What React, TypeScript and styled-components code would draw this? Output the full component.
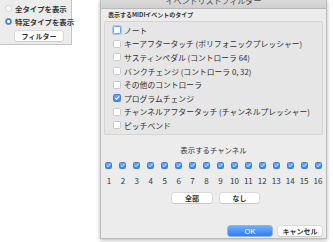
import * as React from "react";
import styled, { createGlobalStyle } from "styled-components";

const GlobalStyle = createGlobalStyle`
  body {
    margin: 0;
    background: #ffffff;
    font-family: "Noto Sans CJK JP", "Noto Sans", sans-serif;
    color: #2a2a2a;
  }
`;

const eventTypes = [
  { label: "ノート", checked: false, focus: true },
  { label: "キーアフタータッチ (ポリフォニックプレッシャー)", checked: false },
  { label: "サスティンペダル (コントローラ 64)", checked: false },
  { label: "バンクチェンジ (コントローラ 0, 32)", checked: false },
  { label: "その他のコントローラ", checked: false },
  { label: "プログラムチェンジ", checked: true },
  { label: "チャンネルアフタータッチ (チャンネルプレッシャー)", checked: false },
  { label: "ピッチベンド", checked: false }
];

const channels = Array.from({ length: 16 }, (_, i) => i + 1);

const Page = styled.div`
  display: flex;
  align-items: flex-start;
  width: 333px;
  height: 242px;
  overflow: hidden;
`;

const SidePanel = styled.div`
  width: 71px;
  height: 42px;
  background: #ececec;
  border-right: 1px solid #c4c4c4;
  border-bottom: 1px solid #c4c4c4;
  display: flex;
  flex-direction: column;
  padding-top: 2px;
  box-sizing: content-box;
`;

const RadioRow = styled.div`
  display: flex;
  align-items: center;
  height: 13px;
  padding-left: 5px;
  gap: 3px;
  font-size: 7.4px;
  font-weight: 700;
  color: #333;
  white-space: nowrap;
`;

const Radio = styled.span<{ $on?: boolean }>`
  width: 7px;
  height: 7px;
  border-radius: 50%;
  box-sizing: border-box;
  flex: none;
  background: ${(p) => (p.$on ? "radial-gradient(circle, #fff 0 1.3px, #3d86ee 1.6px)" : "#fff")};
  border: 1px solid ${(p) => (p.$on ? "#3a7fe0" : "#cfcfcf")};
`;

const SmallButton = styled.div<{ $w: number }>`
  width: ${(p) => p.$w}px;
  height: 10px;
  background: #fff;
  border-radius: 2px;
  box-shadow: 0 0 0 0.5px #c6c6c6, 0 1px 1px rgba(0, 0, 0, 0.12);
  font-size: 7px;
  font-weight: 700;
  color: #333;
  display: flex;
  align-items: center;
  justify-content: center;
  white-space: nowrap;
`;

const FilterButtonWrap = styled.div`
  padding: 3px 0 0 15px;
`;

const Dialog = styled.div`
  margin-left: 28px;
  width: 227px;
  height: 239px;
  background: #ececec;
  border: 1px solid #bcbcbc;
  border-top: none;
  box-sizing: border-box;
  box-shadow: 0 1px 4px rgba(0, 0, 0, 0.3);
  display: flex;
  flex-direction: column;
`;

const TitleBar = styled.div`
  height: 9px;
  background: linear-gradient(#dadada, #d0d0d0);
  border-bottom: 1px solid #b8b8b8;
  box-sizing: border-box;
  display: flex;
  justify-content: center;
  align-items: flex-end;
  overflow: hidden;
  font-size: 8px;
  line-height: 8px;
  color: #4a4a4a;
  padding-bottom: 3px;
`;

const SectionLabel = styled.div`
  font-size: 6px;
  font-weight: 700;
  line-height: 8px;
  margin: 2px 0 2px 7px;
  color: #333;
`;

const GroupBox = styled.div`
  margin: 0 3px;
  height: 114px;
  box-sizing: border-box;
  border: 1px solid #d4d4d4;
  border-radius: 2px;
  background: #e6e6e6;
  padding: 1.5px 0 0 8px;
`;

const TypeRow = styled.div`
  display: flex;
  align-items: center;
  gap: 3px;
  height: 13.6px;
  font-size: 7.8px;
  color: #2e2e2e;
  white-space: nowrap;
`;

const Check = styled.span<{ $on?: boolean; $focus?: boolean; $size: number }>`
  width: ${(p) => p.$size}px;
  height: ${(p) => p.$size}px;
  flex: none;
  box-sizing: border-box;
  border-radius: 1.5px;
  display: flex;
  align-items: center;
  justify-content: center;
  background: ${(p) => (p.$on ? "linear-gradient(#68a8f7, #3a84ee)" : "#fff")};
  border: 1px solid
    ${(p) => (p.$on ? "#3a7fe0" : p.$focus ? "#6fa3ea" : "#c9c9c9")};
  box-shadow: ${(p) => (p.$focus ? "0 0 0 1px #a9c9f3" : "none")};
`;

const ChannelTitle = styled.div`
  text-align: center;
  font-size: 7.4px;
  line-height: 8px;
  margin-top: 11px;
  color: #333;
`;

const ChannelGrid = styled.div`
  display: grid;
  grid-template-columns: repeat(16, 1fr);
  margin: 8px 1px 0;
  row-gap: 8px;
  justify-items: center;
`;

const ChannelNumber = styled.div`
  font-size: 8px;
  line-height: 8px;
  color: #333;
`;

const ButtonRow = styled.div<{ $justify: string }>`
  display: flex;
  justify-content: ${(p) => p.$justify};
  gap: 8px;
`;

const SelectRow = styled(ButtonRow)`
  margin-top: 8px;
  padding-left: 4px;
`;

const FooterRow = styled(ButtonRow)`
  margin-top: auto;
  margin-bottom: 2px;
  padding-right: 4px;
  gap: 6px;
`;

const PrimaryButton = styled(SmallButton)`
  background: linear-gradient(#6cb0fb, #2f7ef2);
  box-shadow: 0 0 0 0.5px #3a7ee6;
  color: #fff;
  font-weight: 400;
  font-family: "Liberation Sans", sans-serif;
  font-size: 7.5px;
`;

const CheckMark: React.FC<{ size: number }> = ({ size }) => (
  <svg width={size - 2} height={size - 2} viewBox="0 0 10 10">
    <path d="M2 5.3 L4.2 7.4 L8.2 2.6" fill="none" stroke="#fff" strokeWidth="1.8" strokeLinecap="round" strokeLinejoin="round" />
  </svg>
);

export default function App() {
  return (
    <>
      <GlobalStyle />
      <Page>
        <SidePanel>
          <RadioRow>
            <Radio />
            全タイプを表示
          </RadioRow>
          <RadioRow>
            <Radio $on />
            特定タイプを表示
          </RadioRow>
          <FilterButtonWrap>
            <SmallButton $w={48}>フィルター</SmallButton>
          </FilterButtonWrap>
        </SidePanel>

        <Dialog>
          <TitleBar>イベントリストフィルダー</TitleBar>
          <SectionLabel>表示するMIDIイベントのタイプ</SectionLabel>
          <GroupBox>
            {eventTypes.map((t) => (
              <TypeRow key={t.label}>
                <Check $size={8} $on={t.checked} $focus={t.focus}>
                  {t.checked && <CheckMark size={8} />}
                </Check>
                {t.label}
              </TypeRow>
            ))}
          </GroupBox>

          <ChannelTitle>表示するチャンネル</ChannelTitle>
          <ChannelGrid>
            {channels.map((c) => (
              <Check key={"c" + c} $size={7} $on>
                <CheckMark size={7} />
              </Check>
            ))}
            {channels.map((c) => (
              <ChannelNumber key={"n" + c}>{c}</ChannelNumber>
            ))}
          </ChannelGrid>

          <SelectRow $justify="center">
            <SmallButton $w={40}>全部</SmallButton>
            <SmallButton $w={39}>なし</SmallButton>
          </SelectRow>

          <FooterRow $justify="flex-end">
            <PrimaryButton $w={44}>OK</PrimaryButton>
            <SmallButton $w={44}>キャンセル</SmallButton>
          </FooterRow>
        </Dialog>
      </Page>
    </>
  );
}
